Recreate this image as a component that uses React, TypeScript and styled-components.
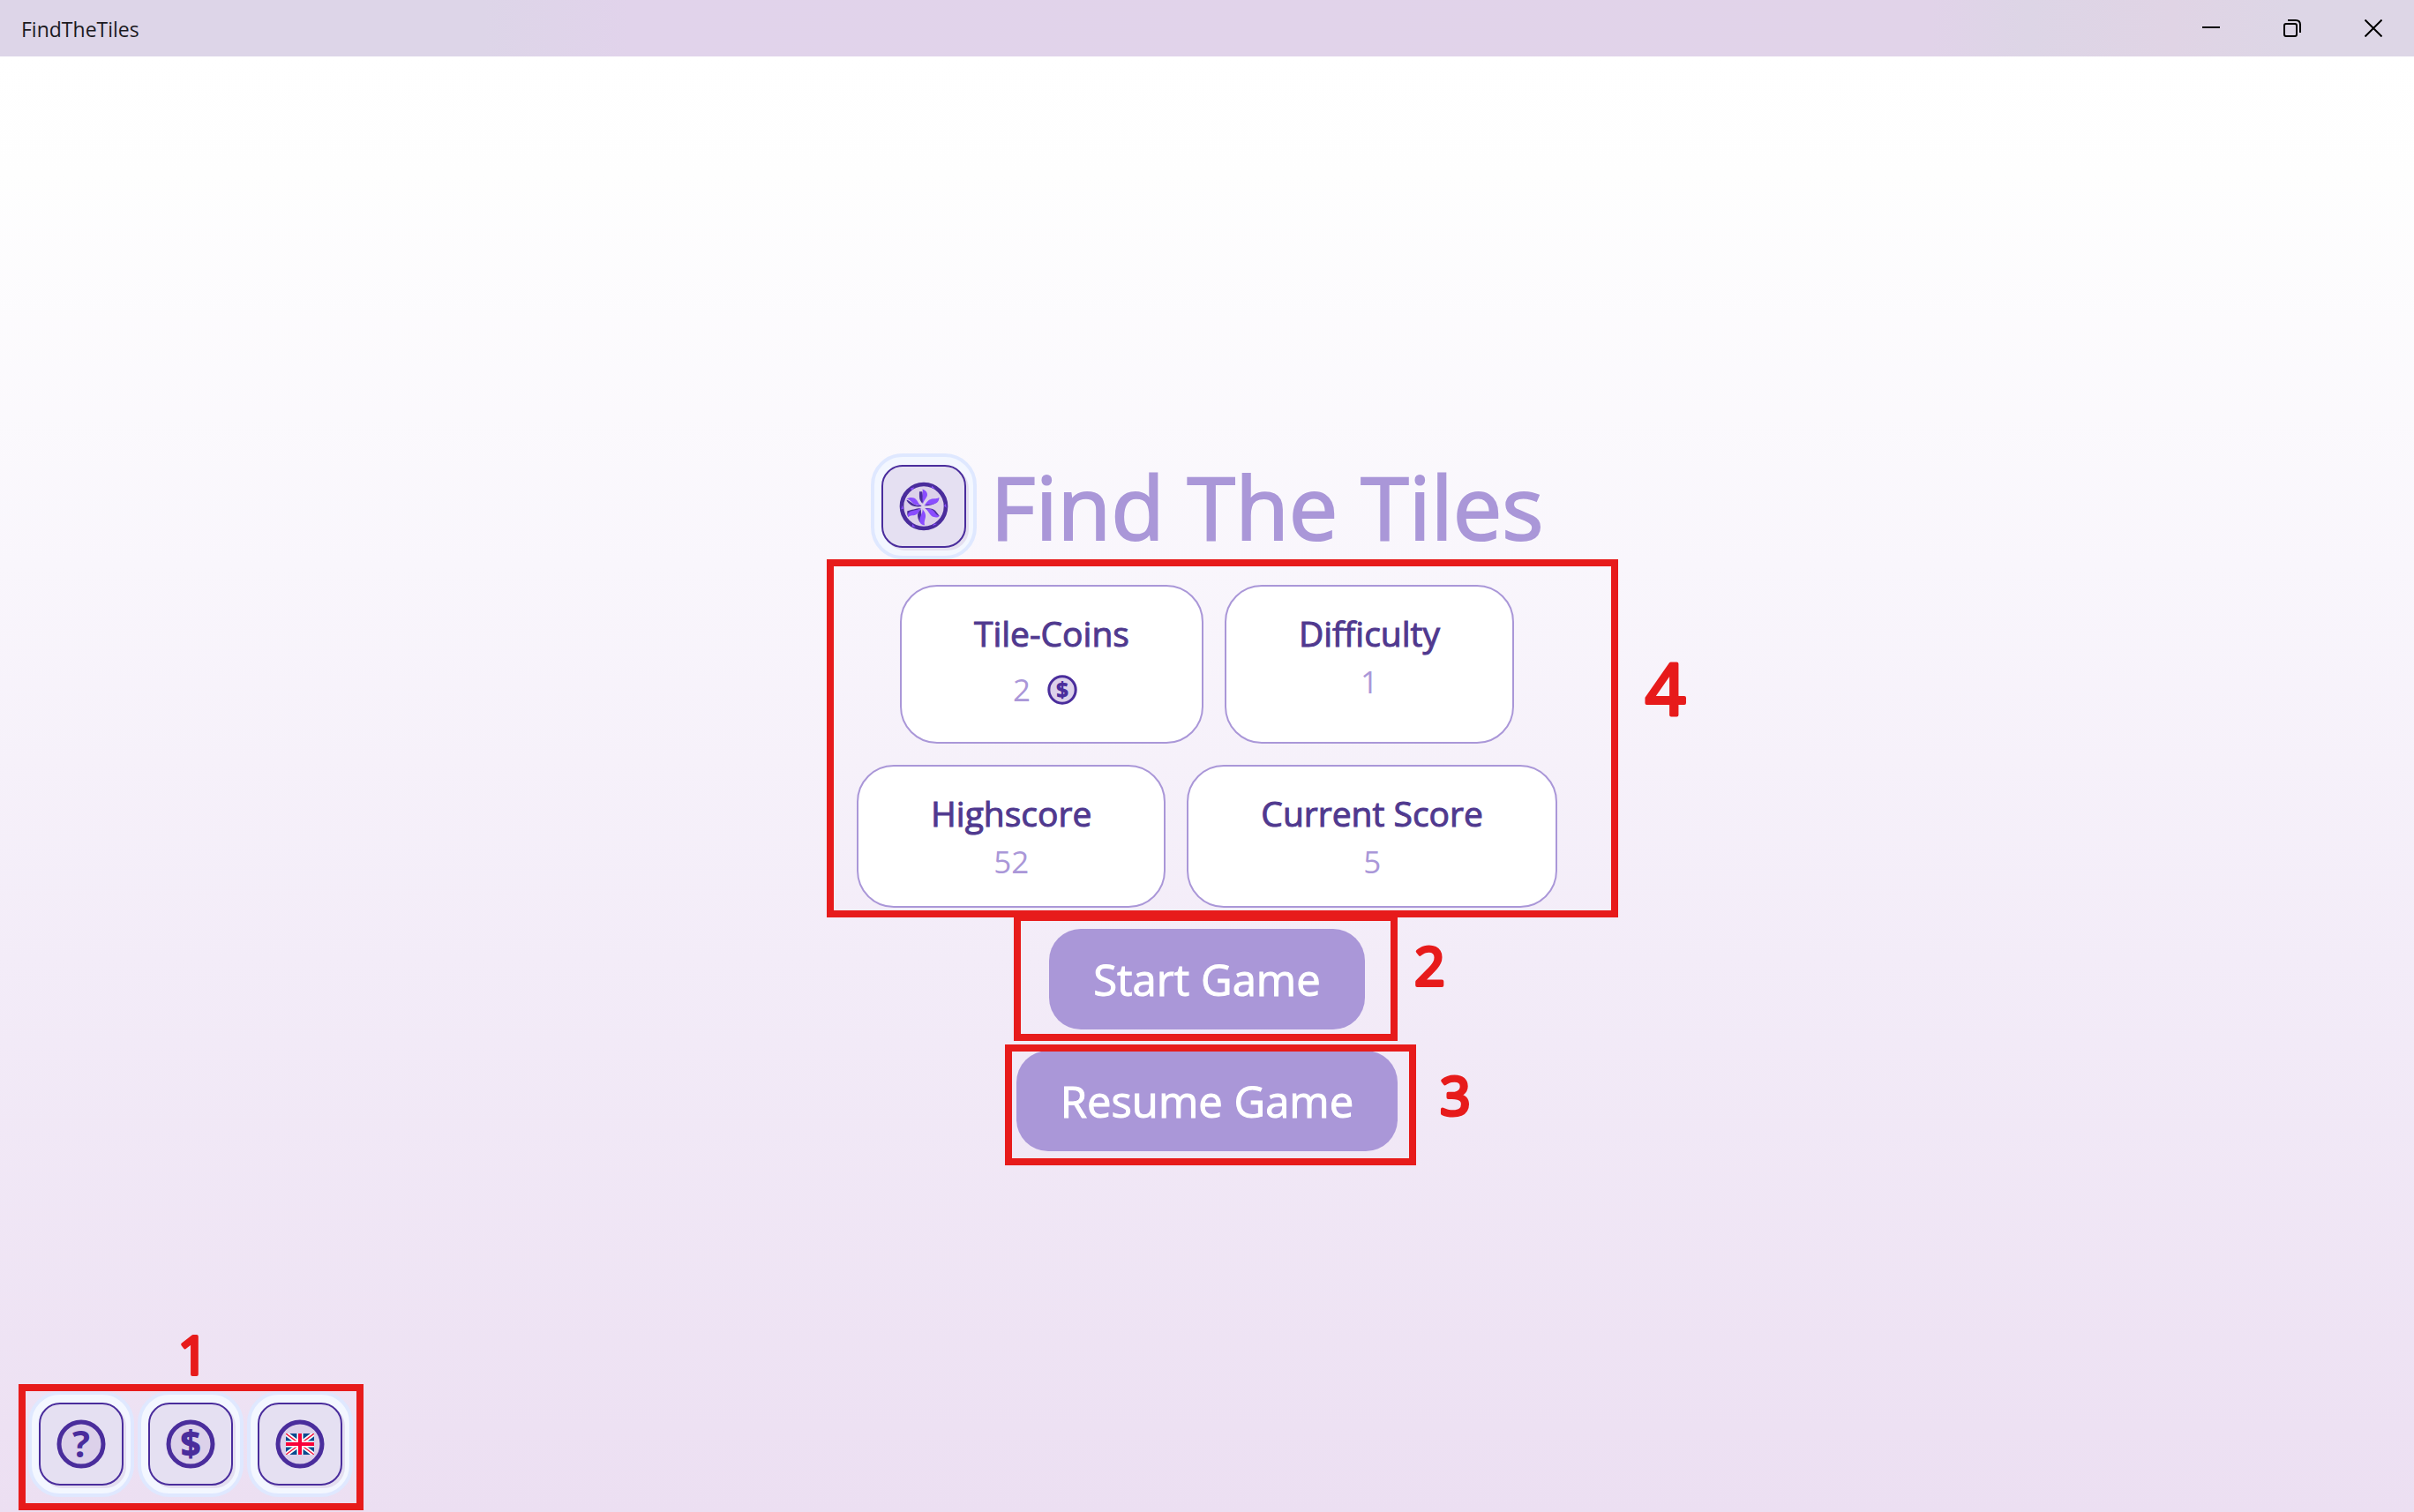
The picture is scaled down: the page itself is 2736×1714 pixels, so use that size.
import React from "react";
import styled, { createGlobalStyle } from "styled-components";

const color = {
  ink: "#4a2d9c",
  heading: "#50398f",
  lilac: "#aa97d8",
  coin: "#dcd1ea",
  tile: "#e5e0f2",
  halo: "#f3f7ff",
  haloEdge: "#dfe8ff",
  mark: "#e71b1b",
};

const GlobalStyle = createGlobalStyle`
  * { box-sizing: border-box; }
  body { margin: 0; font-family: "Open Sans", "Noto Sans", sans-serif; }
  button { font-family: inherit; cursor: pointer; }
`;

const Window = styled.div`
  display: flex;
  flex-direction: column;
  min-height: 100vh;
`;

const TitleBar = styled.header`
  display: flex;
  align-items: center;
  justify-content: space-between;
  height: 64px;
  padding-left: 24px;
  background: linear-gradient(90deg, #ddd5e8 0%, #ddd5e8 20%, #e1d3eb 26%, #e1d3e9 80%, #ddd5e6 84%, #e0d4e5 90%, #ddd6e6 95%);
`;

const AppName = styled.span`
  font-size: 23px;
  line-height: 32px;
  color: #1b1a1f;
  padding-top: 2px;
`;

const WindowControls = styled.div`
  display: flex;
  height: 100%;
`;

const ControlButton = styled.button`
  display: grid;
  place-items: center;
  width: 92px;
  height: 100%;
  padding: 0;
  border: 0;
  background: none;
`;

const Stage = styled.main`
  flex: 1;
  display: grid;
  background: linear-gradient(180deg, #ffffff 0%, #fefefe 8%, #f9f6fc 35%, #f3ecf8 62%, #ecdff2 100%);
`;

const Menu = styled.section`
  grid-area: 1 / 1;
  place-self: center;
  display: flex;
  flex-direction: column;
  align-items: center;
  gap: 24px;
  padding-top: 36px;
`;

const Brand = styled.div`
  display: flex;
  align-items: center;
  gap: 16px;
  height: 130px;
`;

const Title = styled.h1`
  margin: 0;
  font-size: 99px;
  font-weight: 400;
  line-height: 128px;
  color: ${color.lilac};
  -webkit-text-stroke: 2px ${color.lilac};
`;

const Halo = styled.span`
  display: grid;
  place-items: center;
  width: 120px;
  height: 120px;
  border: 4px solid ${color.haloEdge};
  border-radius: 36px;
  background: ${color.halo};
`;

const TileButton = styled.button`
  display: grid;
  place-items: center;
  width: 96px;
  height: 94px;
  padding: 0;
  border: 2px solid ${color.ink};
  border-radius: 24px;
  background: ${color.tile};
  box-shadow: 3px 3px 0 #e4dff0;
`;

const Marked = styled.div`
  position: relative;
`;

const Frame = styled.span<{ $inset: string }>`
  position: absolute;
  inset: ${(p) => p.$inset};
  z-index: 1;
  border: 8px solid ${color.mark};
  pointer-events: none;
`;

const MarkSvg = styled.svg<{ $left: string; $top: string }>`
  position: absolute;
  left: ${(p) => p.$left};
  top: ${(p) => p.$top};
  overflow: visible;
  fill: ${color.mark};
  stroke: ${color.mark};
  stroke-width: 4px;
  stroke-linejoin: round;
`;

const Stats = styled.div`
  display: flex;
  flex-direction: column;
  align-items: center;
  gap: 24px;
`;

const StatRow = styled.div`
  display: flex;
  gap: 24px;
`;

const Card = styled.article`
  display: flex;
  flex-direction: column;
  align-items: center;
  gap: 6px;
  padding: 27px 82px;
  border: 2px solid ${color.lilac};
  border-radius: 42px;
  background: #ffffff;
`;

const CardLabel = styled.h2`
  margin: 0;
  font-size: 39px;
  font-weight: 400;
  line-height: 52px;
  color: ${color.heading};
  -webkit-text-stroke: 1px ${color.heading};
`;

const CardValue = styled.div`
  display: flex;
  align-items: center;
  gap: 4px;
  font-size: 35px;
  line-height: 46px;
  color: ${color.lilac};
`;

const ActionButton = styled.button`
  display: block;
  padding: 24px 50px;
  border: 0;
  border-radius: 36px;
  background: ${color.lilac};
  color: #ffffff;
  font-size: 49px;
  font-weight: 400;
  line-height: 66px;
  -webkit-text-stroke: 1px #ffffff;
`;

const Tray = styled.nav`
  grid-area: 1 / 1;
  place-self: end start;
  padding: 0 0 17px 32px;
`;

const TrayRow = styled.div`
  display: flex;
  gap: 4px;
`;

function Mark({ digit, left, top, width, height, size }: {
  digit: string; left: string; top: string; width: number; height: number; size: number;
}) {
  return (
    <MarkSvg $left={left} $top={top} width={width} height={height}>
      <text x={width / 2} y={height - 3} fontSize={size} textAnchor="middle">{digit}</text>
    </MarkSvg>
  );
}

const CoinSvg = styled.svg`
  overflow: visible;
`;

function Coin({ size, children }: { size: number; children: React.ReactNode }) {
  return (
    <CoinSvg width={size} height={size} viewBox="0 0 56 56" aria-hidden="true">
      <circle cx="28" cy="28" r="25" fill={color.coin} stroke={color.ink} strokeWidth="5" />
      {children}
    </CoinSvg>
  );
}

function Glyph({ char }: { char: string }) {
  const dollar = char === "$";
  return (
    <text x="28" y={dollar ? 42 : 43} textAnchor="middle" fontSize={dollar ? 40 : 42} fontWeight={dollar ? 800 : 700} fill={color.ink}>
      {char}
    </text>
  );
}

function Pinwheel() {
  return (
    <svg width="56" height="56" viewBox="138 134 168 168" aria-hidden="true">
      <circle cx="222" cy="218" r="75" fill={color.coin} stroke={color.ink} strokeWidth="14" />
      <g fill="#8a4dff">
        <path d="M176 157l14-4-8 11z M250 148l10 10-12-3z M297 209l2 14-8-7z M268 277l-16 8 4-8z M184 278l10 12-12-4z M149 214l4 12-8 2z" />
      </g>
      <g fill={color.ink}>
        <path d="M207 168l10 0 4 30-4 10c-10-10-11-20-10-40z" />
        <path d="M163 196c12 0 24 22 48 18l4 4c-22 4-42-2-52-22z" />
        <path d="M224 216c18 0 44-4 50-26l-8 2z" />
        <path d="M226 224c20 0 30 2 38 12l11 14-12 2z" />
        <path d="M212 228c-14 12-14 24-4 44l8-6z" />
        <path d="M212 224c-20 2-30 6-46 10 0 6-2 14 4 20 6-8 20-14 42-30z" />
      </g>
      <g fill="#8a4dff">
        <path d="M217 160c12 2 18 12 17 20-3 12-11 16-15 30-1-16-2-20-1-30 0-8 2-14-1-20z" />
        <path d="M164 193c10-8 26-6 32 2 8 8 6 14 18 21-14-4-20-2-28-8-8-8-12-14-22-15z" />
        <path d="M222 216c8-6 10-18 24-22 8-4 20 0 28-6 0 14-8 20-18 22-12 4-22 0-34 6z" />
        <path d="M226 225c12 2 18 0 28 7 8 6 8 16 22 18-6 8-18 6-26 2-10-8-10-16-24-27z" />
        <path d="M218 228c4 6 12 14 10 26-2 10-6 18-3 28-8 0-18-6-17-16 0-12 10-22 10-38z" />
        <path d="M214 225c-6 6-8 14-16 20-8 6-22 2-29 9-4-8 2-18 12-20 12-4 20-4 33-9z" />
      </g>
    </svg>
  );
}

function UnionJack() {
  return (
    <svg x="12" y="16" width="32" height="24" viewBox="0 0 32 24">
      <rect width="32" height="24" fill="#0b4a8f" />
      <path d="M0 0l32 24M32 0L0 24" stroke="#fff" strokeWidth="5" />
      <path d="M0 0l32 24M32 0L0 24" stroke="#f5123c" strokeWidth="1.4" />
      <path d="M16 0v24M0 12h32" stroke="#fff" strokeWidth="7" />
      <path d="M16 0v24M0 12h32" stroke="#f90038" strokeWidth="4" />
    </svg>
  );
}

function IconTile({ label, children }: { label: string; children: React.ReactNode }) {
  return (
    <Halo>
      <TileButton type="button" aria-label={label}>{children}</TileButton>
    </Halo>
  );
}

function Stat({ label, value, icon }: { label: string; value: number; icon?: React.ReactNode }) {
  return (
    <Card>
      <CardLabel>{label}</CardLabel>
      <CardValue>
        <span>{value}</span>
        {icon}
      </CardValue>
    </Card>
  );
}

const CoinSlot = styled.span`
  display: grid;
  place-items: center;
  width: 64px;
  height: 64px;
`;

export default function App() {
  return (
    <Window>
      <GlobalStyle />
      <TitleBar>
        <AppName>FindTheTiles</AppName>
        <WindowControls>
          <ControlButton type="button" aria-label="Minimize">
            <svg width="20" height="20" fill="none" stroke="#000" strokeWidth="2"><path d="M0 9h20" /></svg>
          </ControlButton>
          <ControlButton type="button" aria-label="Restore">
            <svg width="20" height="20" fill="none" stroke="#000" strokeWidth="2">
              <rect x="1" y="5" width="14" height="14" rx="2" />
              <path d="M5 1h9q5 0 5 5v9" />
            </svg>
          </ControlButton>
          <ControlButton type="button" aria-label="Close">
            <svg width="20" height="20" fill="none" stroke="#000" strokeWidth="2"><path d="M.5.5l19 19M19.5.5l-19 19" /></svg>
          </ControlButton>
        </WindowControls>
      </TitleBar>
      <Stage>
        <Menu>
          <Brand>
            <IconTile label="Tile"><Pinwheel /></IconTile>
            <Title>Find The Tiles</Title>
          </Brand>
          <Marked>
            <Stats>
              <StatRow>
                <Stat
                  label="Tile-Coins"
                  value={2}
                  icon={<CoinSlot><Coin size={34}><Glyph char="$" /></Coin></CoinSlot>}
                />
                <Stat label="Difficulty" value={1} />
              </StatRow>
              <StatRow>
                <Stat label="Highscore" value={52} />
                <Stat label="Current Score" value={5} />
              </StatRow>
            </Stats>
            <Frame $inset="-29px -69px -11px -34px" />
            <Mark digit="4" left="calc(100% + 100px)" top="87px" width={45} height={63} size={80} />
          </Marked>
          <Marked>
            <ActionButton type="button">Start Game</ActionButton>
            <Frame $inset="-17px -37px -13px -40px" />
            <Mark digit="2" left="calc(100% + 57px)" top="16px" width={33} height={51} size={60} />
          </Marked>
          <Marked>
            <ActionButton type="button">Resume Game</ActionButton>
            <Frame $inset="-7px -21px -16px -13px" />
            <Mark digit="3" left="calc(100% + 51px)" top="28px" width={29} height={48} size={60} />
          </Marked>
        </Menu>
        <Tray>
          <Marked>
            <TrayRow>
              <IconTile label="Help"><Coin size={56}><Glyph char="?" /></Coin></IconTile>
              <IconTile label="Shop"><Coin size={56}><Glyph char="$" /></Coin></IconTile>
              <IconTile label="Language"><Coin size={56}><UnionJack /></Coin></IconTile>
            </TrayRow>
            <Frame $inset="-8px -12px -15px -11px" />
            <Mark digit="1" left="169px" top="-59px" width={36} height={43} size={60} />
          </Marked>
        </Tray>
      </Stage>
    </Window>
  );
}
